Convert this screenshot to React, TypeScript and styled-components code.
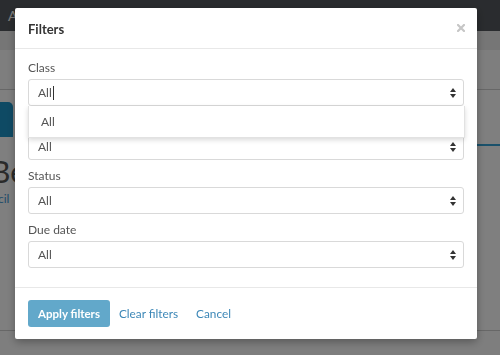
import React from 'react';
import styled, { createGlobalStyle } from 'styled-components';

const C = {
  text: '#333', label: '#555', border: '#d9d9d9', line: '#e8e8e8',
  blue: '#62a8ca', link: '#3c87b7', close: '#c6c6c6',
};

const Global = createGlobalStyle`
  html, body { margin:0; padding:0; }
  body { font-family: Lato, 'Open Sans', sans-serif; background:#fff; overflow:hidden; }
  * { box-sizing:border-box; }
`;

/* page behind the overlay */
const Page = styled.div`
  width:500px; height:355px; display:flex; flex-direction:column;
  background:#fff; overflow:hidden;
`;
const Nav = styled.div`
  height:31px; background:#55595e; flex-shrink:0;
  display:flex; align-items:center; padding-left:8px;
  color:#fff; font-size:14px;
`;
const SubBar = styled.div`
  height:19px; background:#ececec; flex-shrink:0;
`;
const Strip = styled.div`
  height:40px; background:#fdfdfd; border-bottom:1px solid #cfcfcf; flex-shrink:0;
`;
const Main = styled.div`
  flex:1; display:flex; flex-direction:column; padding-top:12px;
`;
const TabRow = styled.div`
  display:flex; align-items:flex-end; height:35px;
`;
const Tab = styled.div`
  width:13px; height:35px; background:#1d95c9; border-radius:0 5px 0 0;
  color:#fff; font-size:12px; display:flex; align-items:center; justify-content:flex-end;
  padding-right:11px; overflow:hidden;
`;
const TabLine = styled.div`
  flex:1; height:2px; margin-bottom:-9px; margin-left:464px;
  background:#35a3d6;
`;
const Heading = styled.div`
  margin:18px 0 0 -9px; font-size:30px; color:#555; line-height:32px;
`;
const SmallLink = styled.div`
  margin:4px 0 0 -22px; font-size:12px; color:#3e98d4;
`;
const Foot = styled.div`
  margin-top:auto; height:25px; border-top:1px solid #cfcfcf; background:#fdfdfd;
`;

/* overlay + modal */
const Overlay = styled.div`
  position:fixed; inset:0; background:rgba(0,0,0,.5);
  padding:8px 0 0 15px;
`;
const Modal = styled.div`
  width:462px; background:#fff; border-radius:2px;
  box-shadow:0 3px 9px rgba(0,0,0,.3);
  display:flex; flex-direction:column;
`;
const Header = styled.div`
  height:41px; padding:0 12px 0 13px; border-bottom:1px solid ${C.line};
  display:flex; align-items:center; justify-content:space-between;
`;
const Title = styled.div`
  font-size:13px; font-weight:700; color:${C.text}; margin-top:1px;
`;
const Body = styled.div`
  padding:10px 13px 12px;
`;
const Group = styled.div`
  margin-bottom:7px; position:relative;
`;
const Label = styled.div<{ $hidden?: boolean }>`
  font-size:12px; line-height:18px; margin-bottom:2px; color:${C.label};
  visibility:${p => (p.$hidden ? 'hidden' : 'visible')};
`;
const Select = styled.div`
  height:27px; border:1px solid ${C.border}; border-radius:3px;
  display:flex; align-items:center; justify-content:space-between;
  padding:0 7px 0 9px; font-size:12px; color:${C.label};
`;
const Value = styled.span`
  display:flex; align-items:center;
`;
const Caret = styled.span`
  width:1px; height:14px; background:#333; margin-left:1px;
`;
const Menu = styled.div`
  position:absolute; left:0; right:-1px; top:47px; height:32px; z-index:2;
  background:#fff; border:1px solid #e2e2e2; border-top:none;
  box-shadow:0 2px 5px rgba(0,0,0,.15);
  display:flex; align-items:center; padding-left:12px;
  font-size:12px; color:${C.label};
`;
const Footer = styled.div`
  border-top:1px solid ${C.line}; padding:12px 13px 12px;
  display:flex; align-items:center;
`;
const Primary = styled.button`
  height:27px; padding:0 10px; border:none; border-radius:3px;
  background:${C.blue}; color:#fff; font-family:inherit;
  font-size:11.5px; font-weight:700;
`;
const LinkBtn = styled.button`
  height:27px; padding:0 9px; border:none; background:transparent;
  color:${C.link}; font-family:inherit; font-size:11.8px;
`;

const CloseIcon = () => (
  <svg width="8" height="8" viewBox="0 0 8 8">
    <path d="M1 1 L7 7 M7 1 L1 7" stroke={C.close} strokeWidth="2.2" strokeLinecap="square" />
  </svg>
);

const Arrows = () => (
  <svg width="6" height="10" viewBox="0 0 6 10">
    <path d="M3 0 L6 4 H0 Z M0 6 H6 L3 10 Z" fill="#333" />
  </svg>
);

const filters = ['Class', 'Group', 'Status', 'Due date'];

export default function App() {
  return (
    <>
      <Global />
      <Page>
        <Nav>A</Nav>
        <SubBar />
        <Strip />
        <Main>
          <TabRow><Tab /><TabLine /></TabRow>
          <Heading>Behaviour</Heading>
          <SmallLink>Pencil</SmallLink>
          <Foot />
        </Main>
      </Page>
      <Overlay>
        <Modal>
          <Header>
            <Title>Filters</Title>
            <CloseIcon />
          </Header>
          <Body>
            {filters.map((f, i) => (
              <Group key={f}>
                <Label $hidden={i === 1}>{f}</Label>
                <Select>
                  <Value>All{i === 0 && <Caret />}</Value>
                  <Arrows />
                </Select>
                {i === 0 && <Menu>All</Menu>}
              </Group>
            ))}
          </Body>
          <Footer>
            <Primary>Apply filters</Primary>
            <LinkBtn>Clear filters</LinkBtn>
            <LinkBtn>Cancel</LinkBtn>
          </Footer>
        </Modal>
      </Overlay>
    </>
  );
}
